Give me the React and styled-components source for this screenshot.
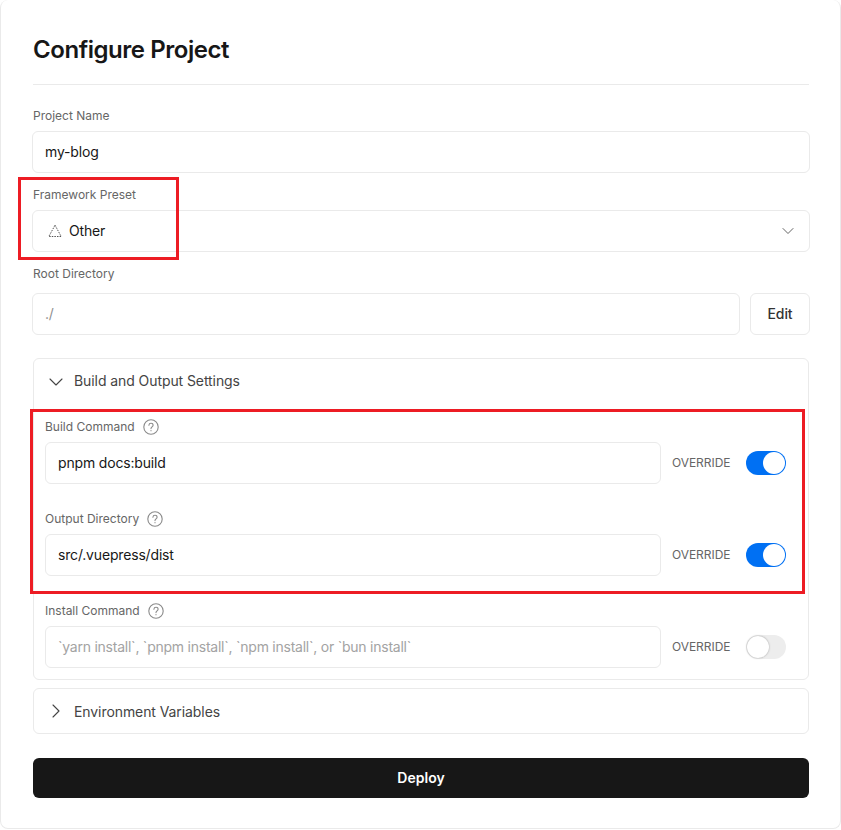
import React from 'react';
import styled, { createGlobalStyle } from 'styled-components';
import { ChevronDown, ChevronRight } from 'lucide-react';

const GlobalStyle = createGlobalStyle`
  html, body {
    margin: 0;
    padding: 0;
    background: #fff;
    font-family: Inter, "Liberation Sans", sans-serif;
  }
  * { box-sizing: border-box; }
`;

const HelpIcon = () => (
  <HelpSvg viewBox="0 0 16 16" fill="none" stroke="#8a8a8a" strokeWidth="1.1">
    <circle cx="8" cy="8" r="7.2" />
    <path d="M5.9 6.2C6 5 6.9 4.3 8 4.3c1.2 0 2.1.8 2.1 1.9 0 1.7-2.1 1.7-2.1 3.4" strokeLinecap="round" />
    <circle cx="8" cy="11.7" r=".6" fill="#8a8a8a" stroke="none" />
  </HelpSvg>
);

const DashedTriangle = () => (
  <svg width="16" height="16" viewBox="0 0 16 16" fill="none" stroke="#555" strokeWidth="1" strokeDasharray="1.5 1.1">
    <path d="M8 2.2 14.2 13.5H1.8Z" />
  </svg>
);

const CommandField = ({ label, value, placeholder, on }) => (
  <Field>
    <CommandLabel>
      {label}
      <HelpIcon />
    </CommandLabel>
    <CommandRow>
      <Input $muted={!value}>{value || placeholder}</Input>
      <OverrideText>OVERRIDE</OverrideText>
      <Toggle $on={on}>
        <Knob $on={on} />
      </Toggle>
    </CommandRow>
  </Field>
);

export default function App() {
  return (
    <>
      <GlobalStyle />
      <Card>
        <Title>Configure Project</Title>
        <Divider />

        <Label>Project Name</Label>
        <WideRow>
          <Input>my-blog</Input>
        </WideRow>

        <PresetLabel>Framework Preset</PresetLabel>
        <WideRow>
          <Select>
            <SelectValue>
              <DashedTriangle />
              <RowText>Other</RowText>
            </SelectValue>
            <ChevronDown size={20} strokeWidth={1.1} color="#555" />
          </Select>
        </WideRow>

        <RootLabel>Root Directory</RootLabel>
        <WideRow>
          <Input $faint>./</Input>
          <EditButton>Edit</EditButton>
        </WideRow>

        <BuildPanel>
          <PanelHeader>
            <ChevronDown size={24} strokeWidth={1.1} color="#444" />
            <RowText>Build and Output Settings</RowText>
          </PanelHeader>
          <PanelBody>
            <CommandField label="Build Command" value="pnpm docs:build" on />
            <CommandField label="Output Directory" value="src/.vuepress/dist" on />
            <CommandField
              label="Install Command"
              placeholder="`yarn install`, `pnpm install`, `npm install`, or `bun install`"
            />
          </PanelBody>
        </BuildPanel>

        <EnvPanel>
          <ChevronRight size={24} strokeWidth={1.1} color="#444" />
          Environment Variables
        </EnvPanel>

        <DeployButton>Deploy</DeployButton>
      </Card>
      <PresetHighlight />
      <CommandsHighlight />
    </>
  );
}

const Card = styled.div`
  width: 841px;
  height: 829px;
  padding: 31px 31px 0 32px;
  border: 1px solid #eaeaea;
  border-top: 0;
  border-radius: 8px;
  background: #fff;
`;
const Title = styled.h1`
  margin: 0;
  height: 38px;
  font-size: 24px;
  line-height: 38px;
  font-weight: 600;
  letter-spacing: -0.45px;
  color: #171717;
`;
const Divider = styled.div`
  height: 1px;
  margin-top: 15px;
  background: #eaeaea;
`;
const Label = styled.div`
  margin-top: 23px;
  height: 16px;
  font-size: 12px;
  line-height: 16px;
  color: #666;
  margin-bottom: 7px;
`;
const PresetLabel = styled(Label)`
  margin-top: 14px;
`;
const RootLabel = styled(Label)`
  margin-top: 14px;
  margin-bottom: 11px;
`;
const WideRow = styled.div`
  display: flex;
  gap: 10px;
  margin: 0 -1px;
`;
const RowText = styled.span`
  margin-bottom: 2px;
`;
const Input = styled.div`
  flex: 1;
  min-width: 0;
  height: 42px;
  padding: 0 12px 2px;
  display: flex;
  align-items: center;
  border: 1px solid #eaeaea;
  border-radius: 6px;
  background: #fff;
  font-size: 14px;
  letter-spacing: ${(p) => (p.$muted ? '-0.24px' : '-0.17px')};
  color: ${(p) => (p.$muted ? '#a3a3a3' : p.$faint ? '#8f8f8f' : '#171717')};
`;
const Select = styled.div`
  flex: 1;
  height: 42px;
  padding: 0 11px 0 14px;
  display: flex;
  align-items: center;
  justify-content: space-between;
  border: 1px solid #eaeaea;
  border-radius: 6px;
  font-size: 14px;
  letter-spacing: -0.17px;
  color: #171717;
`;
const SelectValue = styled.div`
  display: flex;
  align-items: center;
  gap: 6px;
`;
const EditButton = styled.div`
  width: 60px;
  height: 42px;
  padding-bottom: 2px;
  display: flex;
  align-items: center;
  justify-content: center;
  border: 1px solid #eaeaea;
  border-radius: 6px;
  font-size: 14px;
  font-weight: 500;
  letter-spacing: -0.1px;
  color: #333;
`;
const BuildPanel = styled.div`
  height: 322px;
  margin-top: 23px;
  border: 1px solid #eaeaea;
  border-radius: 6px;
`;
const PanelHeader = styled.div`
  height: 45px;
  padding: 0 10px;
  display: flex;
  align-items: center;
  gap: 6px;
  font-size: 14px;
  letter-spacing: -0.08px;
  color: #444;
`;
const PanelBody = styled.div`
  padding: 14px 22px 0 11px;
  display: flex;
  flex-direction: column;
  gap: 26px;
`;
const Field = styled.div`
  display: flex;
  flex-direction: column;
  gap: 7px;
`;
const CommandLabel = styled.div`
  height: 17px;
  display: flex;
  align-items: center;
  gap: 8px;
  font-size: 12px;
  color: #666;
`;
const HelpSvg = styled.svg`
  width: 16px;
  height: 16px;
`;
const CommandRow = styled.div`
  display: flex;
  align-items: center;
`;
const OverrideText = styled.span`
  margin: 0 0 2px 11px;
  width: 60px;
  font-size: 12px;
  letter-spacing: -0.05px;
  color: #666;
`;
const Toggle = styled.div`
  width: 40px;
  height: 24px;
  margin-left: 14px;
  padding: 1px;
  display: flex;
  justify-content: ${(p) => (p.$on ? 'flex-end' : 'flex-start')};
  border-radius: 12px;
  background: ${(p) => (p.$on ? '#0070f3' : '#ededed')};
`;
const Knob = styled.div`
  width: 22px;
  height: 22px;
  border-radius: 50%;
  background: #fff;
  box-shadow: ${(p) => (p.$on ? 'none' : '0 0 2px rgba(0,0,0,.35)')};
`;
const EnvPanel = styled.div`
  height: 46px;
  margin-top: 8px;
  padding: 0 10px;
  display: flex;
  align-items: center;
  gap: 6px;
  border: 1px solid #eaeaea;
  border-radius: 6px;
  font-size: 14px;
  letter-spacing: -0.08px;
  color: #444;
`;
const DeployButton = styled.div`
  height: 40px;
  margin-top: 24px;
  padding-bottom: 2px;
  display: flex;
  align-items: center;
  justify-content: center;
  border-radius: 6px;
  background: #171717;
  font-size: 14px;
  font-weight: 600;
  color: #fff;
`;
const PresetHighlight = styled.div`
  position: absolute;
  left: 18px;
  top: 177px;
  width: 161px;
  height: 83px;
  border: 3px solid #ed1c24;
`;
const CommandsHighlight = styled.div`
  position: absolute;
  left: 30px;
  top: 409px;
  width: 775px;
  height: 185px;
  border: 3px solid #ed1c24;
`;
